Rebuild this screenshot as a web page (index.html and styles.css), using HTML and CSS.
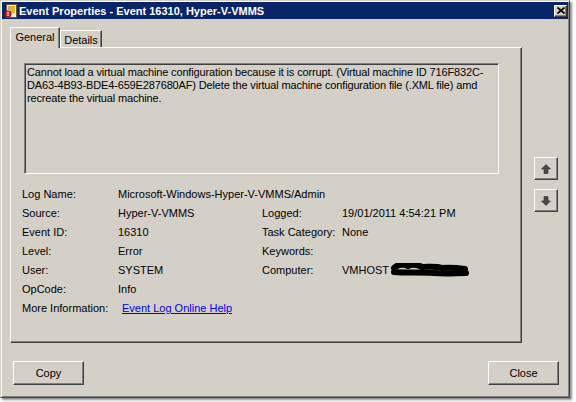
FILE: index.html
```html
<!DOCTYPE html>
<html>
<head>
<meta charset="utf-8">
<link rel="stylesheet" href="styles.css">
</head>
<body>
<div class="window">
  <div class="titlebar">
    <svg class="ticon" width="13" height="14" viewBox="0 0 13 14">
      <rect x="2.5" y="0.5" width="10" height="13" fill="#f4f0e0" stroke="#6a5a3a"/>
      <rect x="6" y="2" width="5" height="7" fill="#e8b030"/>
      <line x1="4" y1="3" x2="6" y2="3" stroke="#806a40"/>
      <line x1="4" y1="5" x2="6" y2="5" stroke="#806a40"/>
      <circle cx="4" cy="10" r="3.2" fill="#d42020" stroke="#801010" stroke-width="0.8"/>
      <rect x="3.4" y="7.8" width="1.2" height="2.6" fill="#fff"/>
      <rect x="3.4" y="11" width="1.2" height="1" fill="#fff"/>
    </svg>
    <span class="ttext">Event Properties - Event 16310, Hyper-V-VMMS</span>
    <div class="tclose">
      <svg width="8" height="7" viewBox="0 0 8 7"><path d="M0.5 0.5 L7.5 6.5 M7.5 0.5 L0.5 6.5" stroke="#000" stroke-width="1.7"/></svg>
    </div>
  </div>
  <div class="body">
    <div class="main">
      <div class="tabcol">
        <div class="tabstrip">
          <div class="tab active">General</div>
          <div class="tab">Details</div>
        </div>
        <div class="panel">
          <div class="msg">Cannot load a virtual machine configuration because it is corrupt. (Virtual machine ID 716F832C-<br>DA63-4B93-BDE4-659E287680AF) Delete the virtual machine configuration file (.XML file) amd<br>recreate the virtual machine.</div>
          <div class="fields">
            <div class="lbl">Log Name:</div><div class="val wide">Microsoft-Windows-Hyper-V-VMMS/Admin</div>
            <div class="lbl">Source:</div><div class="val">Hyper-V-VMMS</div><div class="lbl">Logged:</div><div class="val">19/01/2011 4:54:21 PM</div>
            <div class="lbl">Event ID:</div><div class="val">16310</div><div class="lbl">Task Category:</div><div class="val">None</div>
            <div class="lbl">Level:</div><div class="val">Error</div><div class="lbl">Keywords:</div><div class="val"></div>
            <div class="lbl">User:</div><div class="val">SYSTEM</div><div class="lbl">Computer:</div><div class="val">VMHOST<svg class="scribble" width="80" height="14" viewBox="0 0 80 14"><path d="M4 5 C8 1, 14 1, 18 3 C22 1, 28 2, 32 4 C40 4, 46 3, 52 5 C60 4, 68 5, 75 6" stroke="#000" stroke-width="6" fill="none" stroke-linecap="round" stroke-linejoin="round"/><path d="M4 9 C16 10, 30 9, 44 10 C56 11, 66 10, 76 10" stroke="#000" stroke-width="6" fill="none" stroke-linecap="round"/></svg></div>
            <div class="lbl">OpCode:</div><div class="val">Info</div><div></div><div></div>
            <div class="lbl">More Information:</div><div class="val wide"><a class="link" href="#">Event Log Online Help</a></div>
          </div>
        </div>
      </div>
      <div class="side">
        <div class="btn arrow"><svg width="10" height="10" viewBox="0 0 10 10"><path d="M5 0.5 L9.5 5 L7 5 L7 9.5 L3 9.5 L3 5 L0.5 5 Z" fill="#4a4a4a" stroke="#2a2a2a" stroke-width="0.6"/></svg></div>
        <div class="btn arrow"><svg width="10" height="10" viewBox="0 0 10 10"><path d="M5 9.5 L9.5 5 L7 5 L7 0.5 L3 0.5 L3 5 L0.5 5 Z" fill="#4a4a4a" stroke="#2a2a2a" stroke-width="0.6"/></svg></div>
      </div>
    </div>
    <div class="footer">
      <div class="btn push">Copy</div>
      <div class="btn push">Close</div>
    </div>
  </div>
</div>
</body>
</html>
```
FILE: styles.css
```css
* { box-sizing: border-box; }
html, body { margin: 0; padding: 0; background: #fff; }
body {
  width: 576px;
  height: 402px;
  overflow: hidden;
  font-family: "Liberation Sans", Arial, sans-serif;
  font-size: 11px;
  color: #000;
}
.window {
  width: 570px;
  height: 398px;
  background: #d4d0c8;
  border: 1px solid;
  border-color: #d4d0c8 #404040 #404040 #d4d0c8;
  box-shadow: inset 1px 1px 0 #fff, inset -1px -1px 0 #808080, 2px 2px 2px rgba(0,0,0,0.45);
  padding: 1px;
  display: flex;
  flex-direction: column;
}
.titlebar {
  height: 17px;
  background: #0a246a;
  display: flex;
  align-items: center;
  padding: 0 1px 0 2px;
  color: #fff;
}
.ticon { flex: none; margin-right: 2px; }
.ttext { font-weight: bold; font-size: 11px; white-space: nowrap; }
.tclose {
  margin-left: auto;
  width: 13px;
  height: 12px;
  background: #d4d0c8;
  border: 1px solid;
  border-color: #fff #404040 #404040 #fff;
  box-shadow: inset -1px -1px 0 #808080;
  display: flex;
  align-items: center;
  justify-content: center;
}
.body {
  flex: 1;
  padding: 8px 9px 0 8px;
  display: flex;
  flex-direction: column;
}
.main { display: flex; align-items: flex-start; }
.tabcol { width: 512px; flex: none; }
.tabstrip { display: flex; align-items: flex-end; height: 20px; }
.tab {
  height: 17px;
  width: 42px;
  border: 1px solid;
  border-bottom: none;
  border-color: #fff #404040 #404040 #fff;
  box-shadow: inset -1px 0 0 #808080;
  display: flex;
  align-items: center;
  justify-content: center;
  padding-top: 1px;
}
.tab.active {
  height: 21px;
  width: 50px;
  margin-bottom: -1px;
  position: relative;
  z-index: 1;
  background: #d4d0c8;
  padding-top: 0;
  padding-bottom: 2px;
}
.panel {
  height: 296px;
  border: 1px solid;
  border-color: #fff #404040 #404040 #fff;
  box-shadow: inset -1px -1px 0 #808080;
  padding: 15px 0 0 11px;
}
.msg {
  width: 475px;
  height: 111px;
  margin-left: 2px;
  border: 1px solid;
  border-color: #808080 #fff #fff #808080;
  box-shadow: inset 1px 1px 0 #404040;
  padding: 2px 3px 0 2px;
  line-height: 13px;
  letter-spacing: -0.15px;
  white-space: nowrap;
}
.fields {
  margin-top: 11px;
  display: grid;
  grid-template-columns: 96px 144px 80px auto;
  grid-auto-rows: 19px;
  line-height: 19px;
}
.lbl, .val { white-space: nowrap; }
.val.wide { grid-column: 2 / 5; }
.scribble { vertical-align: -3px; margin-left: 1px; }
.link { color: #0000ee; text-decoration: underline; margin-left: 4px; }
.side {
  margin-left: 12px;
  padding-top: 130px;
  display: flex;
  flex-direction: column;
  gap: 9px;
}
.btn {
  background: #d4d0c8;
  border: 1px solid;
  border-color: #fff #404040 #404040 #fff;
  box-shadow: inset -1px -1px 0 #808080;
  display: flex;
  align-items: center;
  justify-content: center;
}
.arrow { width: 24px; height: 23px; }
.footer {
  margin-top: 18px;
  padding-left: 3px;
  display: flex;
  justify-content: space-between;
}
.push { width: 71px; height: 24px; }
```
